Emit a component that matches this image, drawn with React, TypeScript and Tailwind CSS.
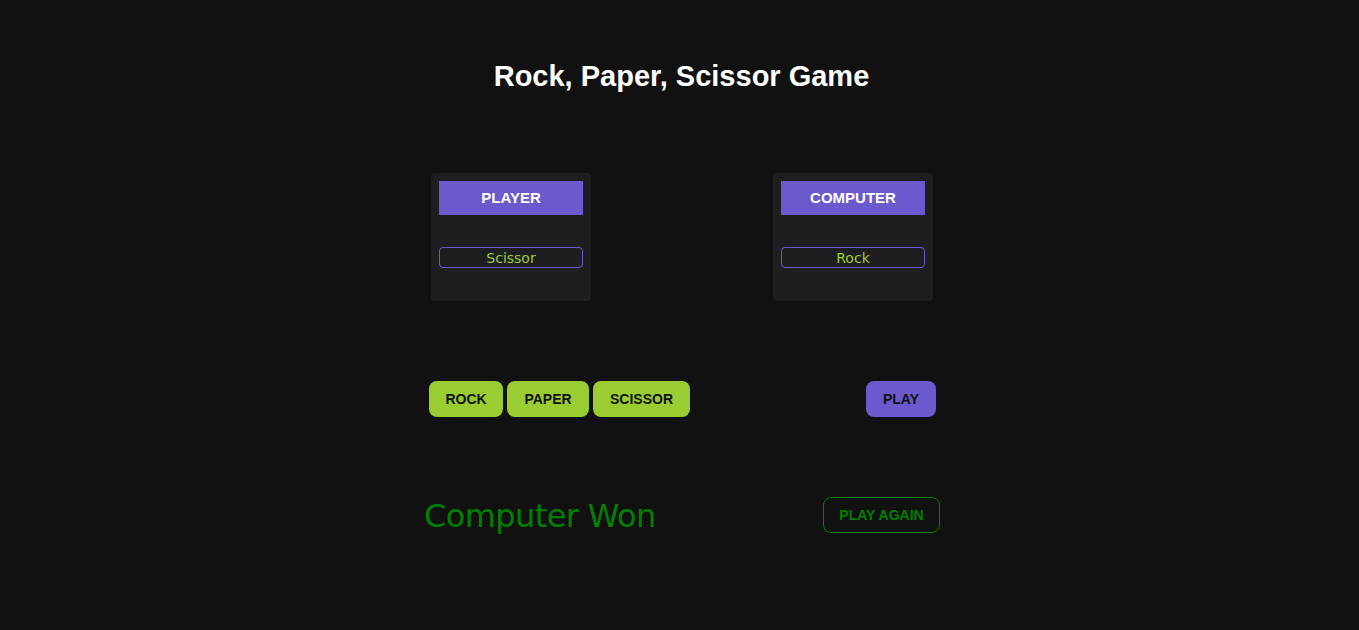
export default function App() {
  const choices = [
    { label: 'ROCK', w: 'w-[74px]' },
    { label: 'PAPER', w: 'w-[82px]' },
    { label: 'SCISSOR', w: 'w-[97px]' },
  ]

  return (
    <div className="min-h-[630px] w-full bg-[#111111] font-['Liberation_Sans',sans-serif]">
      <div className="mx-auto w-[521px] pl-[4px] pt-[57px]">
        {/* Title */}
        <h1 className="h-[38px] text-center text-[29px] leading-[38px] font-bold text-white">
          Rock, Paper, Scissor Game
        </h1>

        {/* Cards */}
        <div className="mt-[78px] flex justify-between pl-[8px] pr-[7px]">
          {[
            { title: 'PLAYER', value: 'Scissor' },
            { title: 'COMPUTER', value: 'Rock' },
          ].map(card => (
            <div key={card.title} className="h-[128px] w-[160px] rounded-[4px] bg-[#1e1e20] p-[8px]">
              <div className="flex h-[34px] items-center justify-center bg-[#6a5acd] pt-[1px] text-[15px] font-bold text-white">
                {card.title}
              </div>
              <div className="mt-[32px] flex h-[21px] items-center justify-center rounded-[4px] border border-[#6a5acd] pt-[1px] text-[14px] text-[#9acd32] font-['DejaVu_Sans',sans-serif]">
                {card.value}
              </div>
            </div>
          ))}
        </div>

        {/* Controls */}
        <div className="mt-[80px] flex items-center justify-between pl-[6px] pr-[4px]">
          <div className="flex gap-[4px]">
            {choices.map(c => (
              <button
                key={c.label}
                className={`${c.w} h-[36px] rounded-[8px] bg-[#9acd32] pt-[1px] text-[14px] font-bold text-[#111111]`}
              >
                {c.label}
              </button>
            ))}
          </div>
          <button className="h-[36px] w-[70px] rounded-[8px] bg-[#6a5acd] pt-[1px] text-[14px] font-bold text-[#111111]">
            PLAY
          </button>
        </div>

        {/* Result */}
        <div className="mt-[80px] flex h-[36px] items-center justify-between">
          <div className="pl-[1px] pt-[2px] text-[32px] leading-[34px] tracking-[-0.6px] text-[#008000] font-['DejaVu_Sans',sans-serif]">
            Computer Won
          </div>
          <button className="h-[36px] w-[117px] rounded-[8px] border border-[#008000] pt-[1px] text-[14px] font-bold text-[#008000]">
            PLAY AGAIN
          </button>
        </div>
      </div>
    </div>
  )
}
